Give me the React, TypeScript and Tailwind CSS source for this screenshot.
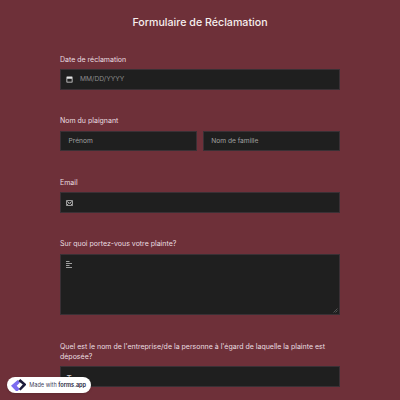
function CalendarIcon() {
    return (
        <svg width="7" height="7" viewBox="0 0 14 14" className="shrink-0">
            <path fill="#e5e5e5" d="M2 1h10a1 1 0 0 1 1 1v10a1 1 0 0 1-1 1H2a1 1 0 0 1-1-1V2a1 1 0 0 1 1-1zm.5 4.5v6h9v-6h-9z" />
        </svg>
    )
}

function MailIcon() {
    return (
        <svg width="7" height="6" viewBox="0 0 14 12" fill="none" stroke="#dcdcdc" strokeWidth="1.5" className="shrink-0">
            <rect x="0.8" y="0.8" width="12.4" height="10.4" rx="1.5" />
            <path d="M1.5 2.5L7 6.5l5.5-4M1.5 10.5L5 7M12.5 10.5L9 7" />
        </svg>
    )
}

function TextIcon() {
    return (
        <svg width="6" height="7" viewBox="0 0 12 14" className="shrink-0">
            <path fill="#a0a0a0" d="M0 0h7v2H0zM0 4h12v2H0zM0 8h7v2H0zM0 12h12v2H0z" />
        </svg>
    )
}

function Logo() {
    return (
        <svg width="15.5" height="12.5" viewBox="0 0 15 12" className="shrink-0">
            <path fill="#7c6cf0" d="M6.5 1L0 6.5 5.5 12.3l3-2.6-3-3.2 3.2-3.2z" />
            <path fill="#1c1b3a" d="M9 0l6 5.2-5.8 6-1.6-1.6 3.8-4.4L7 2z" />
        </svg>
    )
}

function Label({ children }: { children: React.ReactNode }) {
    return <label className="block text-[7px] leading-[10px] font-normal text-[#eadfe0] mb-[4.5px]">{children}</label>
}

const boxClass = "h-[20.67px] bg-[#1f1f1f] border border-[#3a3035] flex items-center"

export default function App() {
    return (
        <div className="relative h-[400px] w-[400px] overflow-hidden bg-[#6e3039] font-['Inter',sans-serif]">
            <div className="w-[280px] mx-auto">
                <h1 className="pt-[15px] text-center text-[10.67px] leading-[16px] font-medium text-[#f6eeee]">
                    Formulaire de Réclamation
                </h1>

                <div className="mt-[23.5px]">
                    <Label>Date de réclamation</Label>
                    <div className={`${boxClass} pl-[5px] gap-[7px]`}>
                        <CalendarIcon />
                        <span className="text-[6.67px] text-[#8c8c8c]">MM/DD/YYYY</span>
                    </div>
                </div>

                <div className="mt-[26.5px]">
                    <Label>Nom du plaignant</Label>
                    <div className="flex gap-[5.33px]">
                        <div className={`${boxClass} flex-1 pl-[7.5px] text-[6.67px] text-[#a0a0a0]`}>Prénom</div>
                        <div className={`${boxClass} flex-1 pl-[7.5px] text-[6.67px] text-[#a0a0a0]`}>Nom de famille</div>
                    </div>
                </div>

                <div className="mt-[26.5px]">
                    <Label>Email</Label>
                    <div className={`${boxClass} pl-[5px]`}>
                        <MailIcon />
                    </div>
                </div>

                <div className="mt-[26.5px]">
                    <Label>Sur quoi portez-vous votre plainte?</Label>
                    <div className="relative h-[61.33px] bg-[#1f1f1f] border border-[#3a3035] pl-[5px] pt-[6px]">
                        <TextIcon />
                        <svg width="5" height="5" viewBox="0 0 5 5" className="absolute right-[1px] bottom-[1px]">
                            <path d="M0.5 4.5L4.5 0.5M2.5 4.5L4.5 2.5" stroke="#777" strokeWidth="0.6" />
                        </svg>
                    </div>
                </div>

                <div className="mt-[26.5px]">
                    <Label>Quel est le nom de l'entreprise/de la personne à l'égard de laquelle la plainte est déposée?</Label>
                    <div className={`${boxClass} pl-[5.5px] items-start pt-[6px]`}>
                        <span className="text-[8px] leading-[10px] text-[#d5d5d5]">T</span>
                    </div>
                </div>
            </div>

            <div className="absolute left-[7px] top-[377px] h-[16.3px] w-[84px] rounded-full bg-white flex items-center pl-[3.7px] gap-[3px] shadow-sm">
                <Logo />
                <span className="text-[5.6px] text-[#44445a] whitespace-nowrap">
                    Made with <span className="font-semibold text-[#22223a]">forms.app</span>
                </span>
            </div>
        </div>
    )
}
